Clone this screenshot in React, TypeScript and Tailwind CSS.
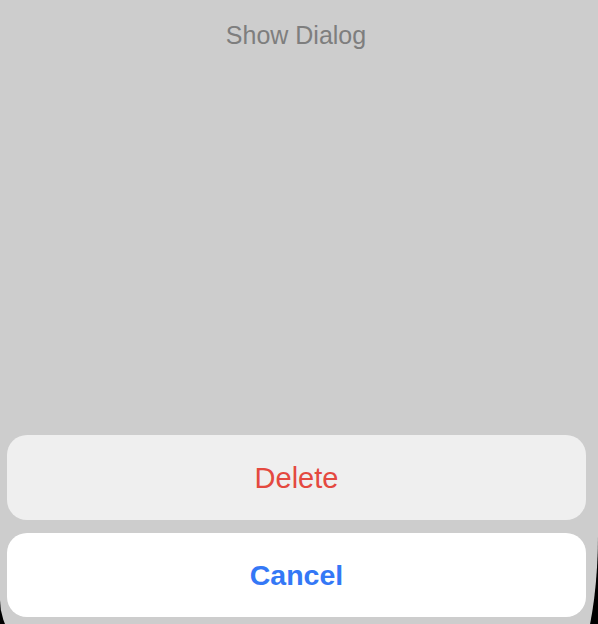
export default function App() {
  return (
    <div className="h-[624px] w-full overflow-hidden bg-black" style={{ fontFamily: '"Liberation Sans", Arial, sans-serif' }}>
      <div className="flex h-[700px] w-full flex-col bg-[#cdcdcd] rounded-bl-[171px_100px] rounded-br-[50px_165px]">
        <div className="mt-[21px] flex h-[28px] items-center justify-center pr-[6px] text-[25px] leading-[28px] text-[#7e7e7e]">
          Show Dialog
        </div>
        <div className="mt-[386px] flex flex-col gap-[13px] pl-[7px] pr-[12px]">
          <div className="flex h-[85px] items-center justify-center rounded-[20px] bg-[#efefef] pt-[2px] text-[29px] text-[#e4493f]">
            Delete
          </div>
          <div className="flex h-[84px] items-center justify-center rounded-[20px] bg-white text-[28.5px] font-bold text-[#3478f6]">
            Cancel
          </div>
        </div>
      </div>
    </div>
  );
}
